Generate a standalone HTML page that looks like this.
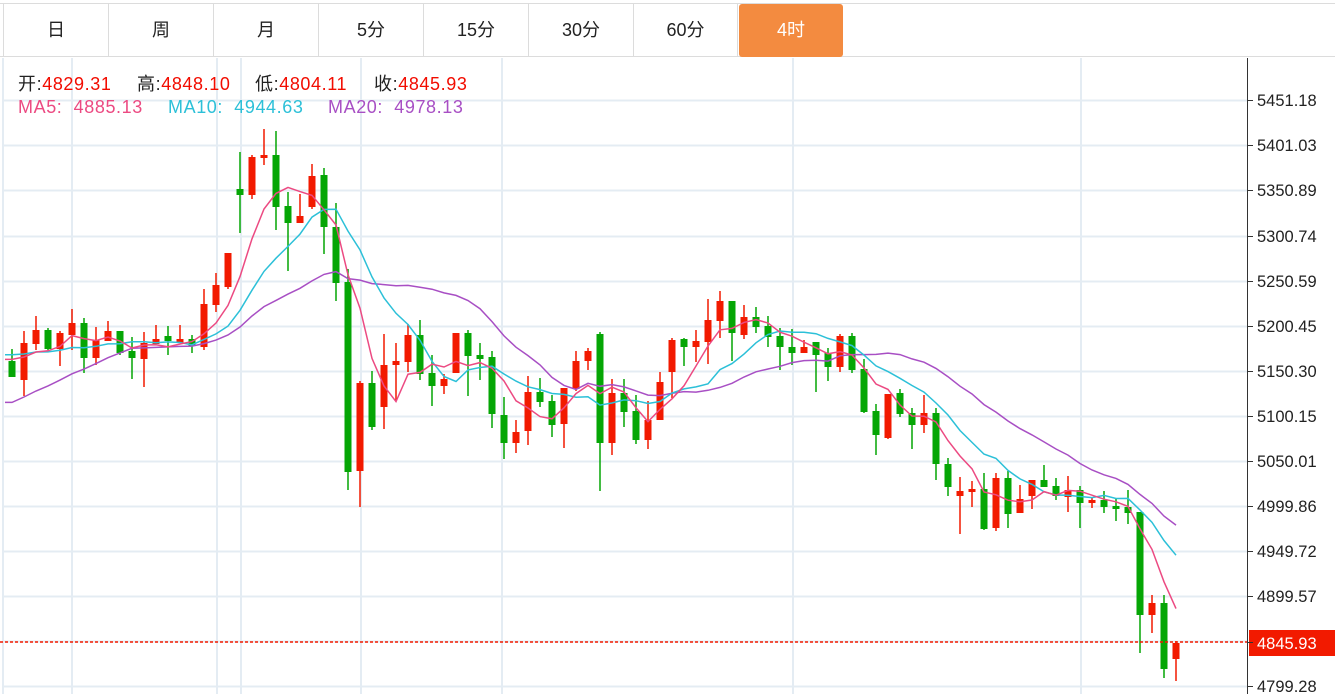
<!DOCTYPE html>
<html><head><meta charset="utf-8">
<style>
html,body{margin:0;padding:0;background:#fff;width:1335px;height:694px;overflow:hidden;font-family:"Liberation Sans","Noto Sans CJK SC",sans-serif;}
.tabs{position:absolute;left:0;top:3px;width:1335px;height:54px;border-top:1px solid #dcdcdc;border-bottom:1px solid #dcdcdc;box-sizing:border-box;}
.tab{position:absolute;top:0;height:53px;width:105px;border-left:1px solid #dcdcdc;box-sizing:border-box;text-align:center;line-height:53px;font-size:18px;color:#222;}
.tab.on{background:#f38b40;color:#fff;border-radius:3px;border:none;}
.leg{position:absolute;font-size:18px;letter-spacing:0.6px;white-space:nowrap;}
.r{color:#f20c00}
</style></head><body>
<svg id="c" width="1335" height="694" style="position:absolute;left:0;top:0"></svg>
<div class="tabs">
<div class="tab" style="left:3px">日</div>
<div class="tab" style="left:108px">周</div>
<div class="tab" style="left:213px">月</div>
<div class="tab" style="left:318px">5分</div>
<div class="tab" style="left:423px">15分</div>
<div class="tab" style="left:528px">30分</div>
<div class="tab" style="left:633px;border-right:1px solid #dcdcdc">60分</div>
<div class="tab on" style="left:739px;width:104px">4时</div>
</div>
<div class="leg" style="top:70px;left:18px;color:#222">开:<span class="r">4829.31</span></div>
<div class="leg" style="top:70px;left:137px;color:#222">高:<span class="r">4848.10</span></div>
<div class="leg" style="top:70px;left:255px;color:#222">低:<span class="r">4804.11</span></div>
<div class="leg" style="top:70px;left:374px;color:#222">收:<span class="r">4845.93</span></div>
<div class="leg" style="top:97px;left:18px;color:#ec4a82">MA5:&nbsp; 4885.13</div>
<div class="leg" style="top:97px;left:168px;color:#2cc0d8">MA10:&nbsp; 4944.63</div>
<div class="leg" style="top:97px;left:328px;color:#a84fc4">MA20:&nbsp; 4978.13</div>
<script>
var s=[];
var ys=[100,145,190,236,281,326,371,416,461,506,551,596,641,686];
var lab=["5451.18","5401.03","5350.89","5300.74","5250.59","5200.45","5150.30","5100.15","5050.01","4999.86","4949.72","4899.57","","4799.28"];
ys.forEach(function(y,i){s.push('<line x1="3" x2="1247" y1="'+(y+.5)+'" y2="'+(y+.5)+'" stroke="#e4ecf3" stroke-width="2"/>');});
[3,72,217,241,361,502,793,1081].forEach(function(x){s.push('<line x1="'+x+'" x2="'+x+'" y1="58" y2="694" stroke="#e4ecf3" stroke-width="2"/>');});
var d=[["G",361,377,349,377],["R",343,380,331,396],["R",330,344,316,350],["G",330,349,328,350],["R",333,349,331,366],["R",323,335,309,350],["G",323,358,318,373],["R",340,358,327,365],["R",331,341,321,341],["G",331,353,331,355],["G",351,358,337,379],["R",343,359,332,387],["R",339,344,325,344],["G",336,341,326,355],["R",339,343,325,343],["G",339,346,335,353],["R",304,347,289,350],["R",285,305,273,312],["R",253,287,253,289],["G",189,195,152,233],["R",157,195,155,199],["R",155,158,129,165],["G",155,207,131,230],["G",206,223,192,271],["R",216,223,194,223],["R",176,207,164,209],["G",175,227,168,254],["G",227,283,203,301],["G",282,472,269,490],["R",383,471,381,507],["G",383,427,371,430],["R",365,407,334,429],["R",361,365,343,400],["R",335,362,324,372],["G",335,374,320,380],["G",373,386,355,406],["R",379,386,374,394],["R",333,373,333,373],["G",333,356,330,396],["G",355,359,343,380],["G",357,414,351,428],["G",415,443,397,459],["R",432,443,420,453],["R",392,431,376,445],["G",392,402,378,407],["G",401,425,395,437],["R",388,424,388,448],["R",361,389,351,391],["R",351,361,348,370],["G",334,443,332,491],["R",393,443,379,455],["G",393,412,379,427],["G",411,440,395,444],["R",420,440,401,449],["R",382,420,372,420],["R",340,372,338,398],["G",339,347,338,366],["R",341,347,330,362],["R",320,342,299,364],["R",301,321,291,338],["G",301,333,301,361],["R",317,335,305,339],["G",317,327,307,333],["G",326,337,316,347],["G",336,347,328,370],["G",347,353,329,365],["R",347,353,340,353],["G",342,355,342,392],["G",353,367,348,381],["R",336,367,334,372],["G",336,370,333,373],["G",369,412,359,413],["G",411,435,404,455],["R",394,438,394,439],["G",393,414,389,417],["G",413,425,408,449],["R",413,425,395,433],["G",413,464,408,480],["G",464,487,458,496],["R",491,496,477,534],["R",489,492,481,507],["G",489,529,473,530],["R",478,528,473,531],["G",478,514,471,528],["R",499,513,485,513],["R",480,496,480,509],["G",480,487,465,487],["G",486,496,478,500],["R",490,497,476,512],["G",490,503,486,528],["R",500,503,497,508],["G",500,507,491,513],["G",506,509,499,521],["G",507,513,490,524],["G",512,615,512,653],["R",603,615,595,633],["G",603,669,595,678],["R",643,659,641,681]];
var closes=[];for(var k=0;k<10;k++)closes.push(450);for(k=0;k<5;k++)closes.push(350);for(k=0;k<4;k++)closes.push(355);
d.forEach(function(c){closes.push(c[0]=="G"?c[2]:c[1]);});
function ma(n,col){var p=[];for(var i=0;i<d.length;i++){var j=i+19,sum=0;for(var m=0;m<n;m++)sum+=closes[j-m];var y=sum/n;var x=12+12*i;if(i==0)p.push((5)+","+y.toFixed(1));p.push(x+","+y.toFixed(1));}
s.push('<polyline points="'+p.join(" ")+'" fill="none" stroke="'+col+'" stroke-width="1.5"/>');}
d.forEach(function(c,i){var x=12+12*i;var col=c[0]=="G"?"#05a605":"#f21a00";
s.push('<rect x="'+(x-0.75)+'" y="'+c[3]+'" width="1.5" height="'+Math.max(1,c[4]-c[3])+'" fill="'+col+'"/>');
s.push('<rect x="'+(x-3.5)+'" y="'+c[1]+'" width="7" height="'+Math.max(2,c[2]-c[1])+'" fill="'+col+'"/>');});
ma(20,"#a84fc4");ma(10,"#2cc0d8");ma(5,"#ec4a82");
s.push('<line x1="0" x2="1247" y1="642" y2="642" stroke="#f21a00" stroke-width="1.5" stroke-dasharray="3,2"/>');
s.push('<line x1="1247.5" x2="1247.5" y1="58" y2="694" stroke="#333" stroke-width="1"/>');
ys.forEach(function(y,i){if(!lab[i])return;s.push('<line x1="1247" x2="1253" y1="'+(y+.5)+'" y2="'+(y+.5)+'" stroke="#333"/>');
s.push('<text x="1257" y="'+(y+6)+'" font-size="16.5" fill="#222" font-family="Liberation Sans,sans-serif">'+lab[i]+'</text>');});
s.push('<rect x="1249" y="630" width="86" height="26" fill="#f21a00"/>');
s.push('<line x1="1247" x2="1253" y1="642.5" y2="642.5" stroke="#333"/>');
s.push('<text x="1257" y="649" font-size="16.5" fill="#fff" font-family="Liberation Sans,sans-serif">4845.93</text>');
document.getElementById("c").innerHTML=s.join("");
</script>
</body></html>
